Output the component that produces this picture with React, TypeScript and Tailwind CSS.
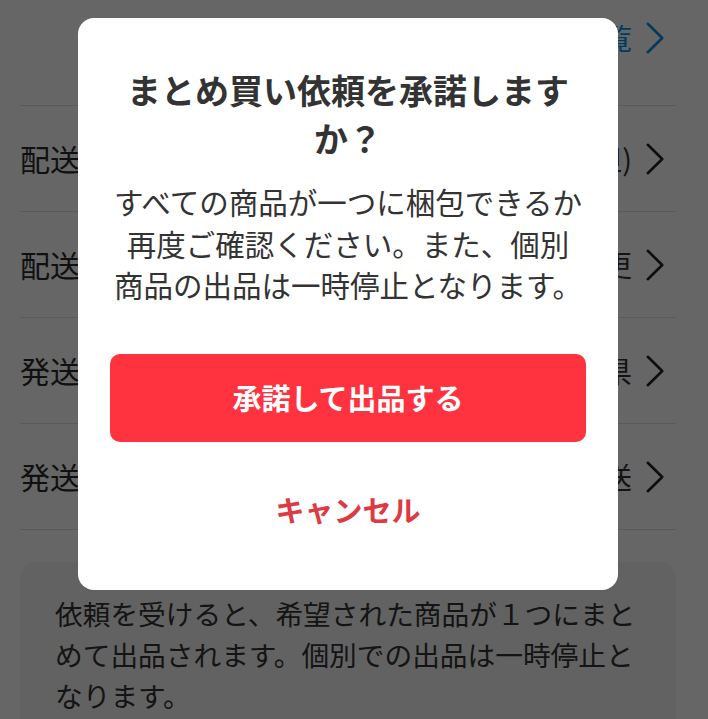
import React from 'react'

// まとめ買い依頼の承諾ダイアログ

function Chevron({ className }: { className?: string }) {
  return (
    <svg width="18" height="32" viewBox="0 0 18 32" fill="none" className={className}>
      <path d="M1.8 1.8 L16.2 16 L1.8 30.2" stroke="currentColor" strokeWidth="2.6" strokeLinecap="round" strokeLinejoin="round" />
    </svg>
  )
}

interface RowProps {
  label: string
  value: string
}

function SettingRow({ label, value }: RowProps) {
  return (
    <div className="h-[106px] flex items-center justify-between border-b border-[#e0e0e0]">
      <span className="text-[30px] text-[#2a2a2a]">{label}</span>
      <div className="flex items-center gap-[14px] pr-[12px]">
        <span className="text-[29px] text-[#333]">{value}</span>
        <Chevron className="text-[#222]" />
      </div>
    </div>
  )
}

export default function App() {
  const rows: RowProps[] = [
    { label: '配送料の負担', value: '送料込み(出品者負担)' },
    { label: '配送の方法', value: '未定・あとで変更' },
    { label: '発送元の地域', value: '神奈川県' },
    { label: '発送までの日数', value: '1~2日で発送' },
  ]

  return (
    <div className="relative min-h-screen bg-white font-['Noto_Sans_CJK_JP',sans-serif]">
      {/* 背景のページ */}
      <div className="w-[696px] px-[20px]">
        <div className="h-[106px] pb-[30px] flex items-center justify-end border-b border-[#e0e0e0]">
          <div className="flex items-center gap-[14px] pr-[12px]">
            <span className="text-[29px] text-[#0095ee]">まとめ買いの商品一覧</span>
            <Chevron className="text-[#0a8ee6]" />
          </div>
        </div>
        {rows.map((row) => (
          <SettingRow key={row.label} label={row.label} value={row.value} />
        ))}
        <div className="mt-[32px] rounded-2xl bg-[#f5f5f5] px-[35px] pt-[31px] pb-[30px]">
          <p className="text-[27.7px] leading-[41px] text-[#333]">
            依頼を受けると、希望された商品が１つにまとめて出品されます。個別での出品は一時停止となります。
          </p>
        </div>
      </div>

      {/* ダイアログ */}
      <div className="fixed inset-0 bg-black/60">
        <div className="w-[696px] flex justify-center pt-[18px]">
          <div className="w-[540px] rounded-2xl bg-white px-[32px] pt-[48px] pb-[36px] text-center">
            <h2 className="text-[34px] leading-[48px] font-bold text-[#333]">
              まとめ買い依頼を承諾します
              <br />
              か？
            </h2>
            <p className="mt-[19px] text-[29.5px] leading-[41.5px] text-[#333]">
              すべての商品が一つに梱包できるか
              <br />
              再度ご確認ください。また、個別
              <br />
              商品の出品は一時停止となります。
            </p>
            <button
              type="button"
              className="mt-[48px] w-full h-[88px] rounded-[10px] bg-[#ff333f] text-white text-[29px] font-bold"
            >
              承諾して出品する
            </button>
            <button
              type="button"
              className="mt-[24px] w-full h-[88px] text-[#de3a44] text-[29px] font-bold"
            >
              キャンセル
            </button>
          </div>
        </div>
      </div>
    </div>
  )
}
